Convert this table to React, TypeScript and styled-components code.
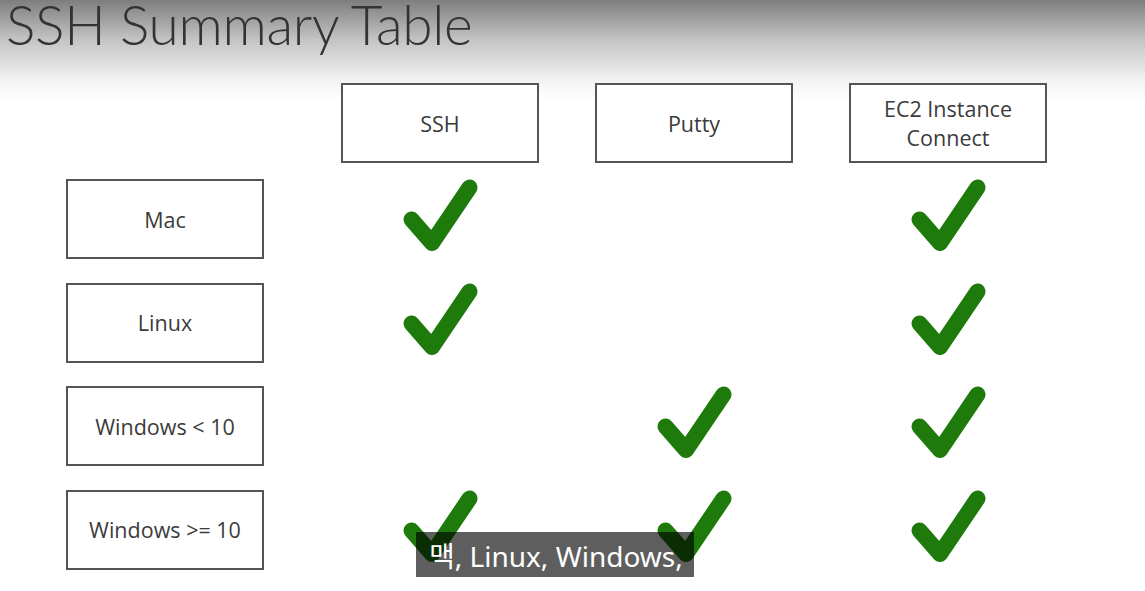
import styled, { createGlobalStyle } from 'styled-components'

const GlobalStyle = createGlobalStyle`
  html, body { margin: 0; padding: 0; }
  body { background: #fff; }
`;

const Slide = styled.div`
  position: relative;
  width: 1145px;
  height: 591px;
  overflow: hidden;
  background: linear-gradient(to bottom, #7e7e7e 0px, #c4c4c4 40px, #f2f2f2 80px, #ffffff 100px);
  font-family: "Open Sans", sans-serif;
`;

const Title = styled.h1`
  margin: 0;
  padding: 0 0 0 6px;
  height: 83px;
  font-family: Lato, sans-serif;
  font-weight: 300;
  font-size: 55px;
  line-height: 48px;
  color: #333;
  letter-spacing: -0.3px;
`;

const Table = styled.div`
  display: flex;
  flex-direction: column;
  padding-left: 66px;
`;

const Row = styled.div<{ $header?: boolean }>`
  display: grid;
  grid-template-columns: 219px repeat(3, 198px);
  column-gap: 56px;
  height: 80px;
  margin-bottom: ${p => (p.$header ? '16px' : '23.5px')};
`;

const Cell = styled.div`
  width: 198px;
  height: 80px;
  box-sizing: border-box;
  border: 2px solid #555;
  background: #fff;
  display: flex;
  align-items: center;
  justify-content: center;
  text-align: center;
  font-family: "Open Sans", sans-serif;
  font-size: 21.5px;
  line-height: 29px;
  color: #3b3b3b;
`;

const Blank = styled.div``;

const CheckCell = styled.div`
  display: flex;
  align-items: center;
  justify-content: center;
  padding-bottom: 8px;
`;

const Caption = styled.div`
  position: absolute;
  left: 416px;
  top: 532px;
  width: 278px;
  height: 45px;
  box-sizing: border-box;
  padding-left: 13px;
  display: flex;
  align-items: center;
  background: rgba(0, 0, 0, 0.63);
  color: #fff;
  font-family: "Noto Sans", "Noto Sans CJK KR", sans-serif;
  font-size: 28px;
  white-space: nowrap;
`;

function Check() {
  return (
    <svg width="75" height="73" viewBox="0 0 75 73">
      <polyline
        points="8.5,40.5 29,64 66.5,8.5"
        fill="none"
        stroke="#1d7a0b"
        strokeWidth="16"
        strokeLinecap="round"
        strokeLinejoin="round"
      />
    </svg>
  );
}

const rows: { name: string; marks: boolean[] }[] = [
  { name: 'Mac', marks: [true, false, true] },
  { name: 'Linux', marks: [true, false, true] },
  { name: 'Windows < 10', marks: [false, true, true] },
  { name: 'Windows >= 10', marks: [true, true, true] },
];

export default function App() {
  return (
    <Slide>
      <GlobalStyle />
      <Title>SSH Summary Table</Title>
      <Table>
        <Row $header>
          <Blank />
          <Cell>SSH</Cell>
          <Cell>Putty</Cell>
          <Cell>EC2 Instance<br />Connect</Cell>
        </Row>
        {rows.map(r => (
          <Row key={r.name}>
            <Cell>{r.name}</Cell>
            {r.marks.map((m, i) => (
              <CheckCell key={i}>{m && <Check />}</CheckCell>
            ))}
          </Row>
        ))}
      </Table>
      <Caption>맥, Linux, Windows,</Caption>
    </Slide>
  );
}
